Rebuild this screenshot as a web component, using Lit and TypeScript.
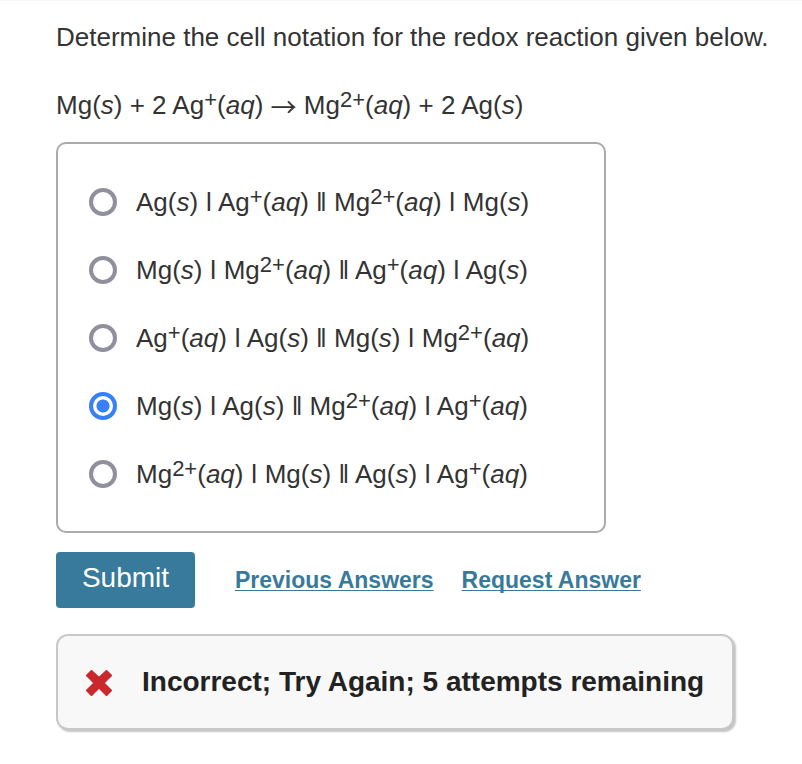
import { LitElement, html, css } from "lit";
import { customElement, state } from "lit/decorators.js";

const sup = (t: string) => html`<sup>${t}</sup>`;
const ph = (t: string) => html`(<i>${t}</i>)`;
const mg = html`Mg${ph("s")}`;
const mgIon = html`Mg${sup("2+")}${ph("aq")}`;
const ag = html`Ag${ph("s")}`;
const agIon = html`Ag${sup("+")}${ph("aq")}`;

const options = [
  [ag, agIon, mgIon, mg],
  [mg, mgIon, agIon, ag],
  [agIon, ag, mg, mgIon],
  [mg, ag, mgIon, agIon],
  [mgIon, mg, ag, agIon],
];

@customElement("app-root")
export class AppRoot extends LitElement {
  @state() private selected = 3;

  static styles = css`
    :host {
      display: block;
      padding: 19px 24px 32px 56px;
      border-top: 1px solid #f8f8f8;
      background: #fff;
      color: #333;
      font: 26px/34px "Liberation Sans", Arial, sans-serif;
    }
    p { margin: 0; }
    .reaction { margin: 34px 0 20px; }
    .arrow { font-family: "Noto Sans CJK JP", sans-serif; line-height: 0; vertical-align: -3px; }
    sup { font-size: 22px; line-height: 0; vertical-align: 7px; }
    .choices {
      box-sizing: border-box;
      width: fit-content;
      margin: 0;
      padding: 24px 75px 23px 31px;
      border: 2px solid #aaa;
      border-radius: 10px;
    }
    .choice { display: flex; align-items: center; gap: 19px; height: 68px; white-space: nowrap; }
    input {
      appearance: none;
      flex: none;
      box-sizing: border-box;
      width: 28px;
      height: 28px;
      margin: 0;
      border: 4px solid #8f8f9d;
      border-radius: 50%;
      background: #fff;
    }
    input:checked { border-color: #3880f8; background: radial-gradient(circle, #3880f8 6px, #fff 7px); }
    .actions { display: flex; align-items: center; gap: 28px; margin: 19px 0 26px; }
    button {
      width: 139px;
      height: 56px;
      margin-right: 12px;
      padding: 0 0 4px;
      border: 0;
      border-radius: 4px;
      background: #387a9b;
      color: #fff;
      font: 28px/34px "Liberation Sans", Arial, sans-serif;
    }
    a {
      color: #387a9b;
      font-size: 23px;
      font-weight: 700;
      text-decoration-thickness: 1px;
      text-underline-offset: 2px;
      text-decoration-skip-ink: none;
    }
    .feedback {
      display: flex;
      align-items: center;
      gap: 29px;
      box-sizing: border-box;
      width: fit-content;
      height: 96px;
      padding: 0 28px 0 27px;
      border: 2px solid #c8c8c8;
      border-radius: 12px;
      background: #f8f8f8;
      box-shadow: 2px 2px 2px #c4c4c4;
      color: #222;
      font-size: 28px;
      font-weight: 700;
      white-space: nowrap;
    }
    svg { flex: none; width: 28px; height: 28px; }
  `;

  render() {
    return html`
      <p>Determine the cell notation for the redox reaction given below.</p>
      <p class="reaction">${mg} + 2 ${agIon} <span class="arrow">→</span> ${mgIon} + 2 ${ag}</p>
      <fieldset class="choices" aria-label="Cell notation">
        ${options.map(
          ([a, b, c, d], i) => html`<label class="choice">
            <input type="radio" name="cell" .checked=${this.selected === i} @change=${() => (this.selected = i)} />
            <span>${a} ǀ ${b} ǁ ${c} ǀ ${d}</span>
          </label>`,
        )}
      </fieldset>
      <div class="actions">
        <button type="button">Submit</button>
        <a href="#previous">Previous Answers</a>
        <a href="#request">Request Answer</a>
      </div>
      <div class="feedback" role="status">
        <svg viewBox="0 0 28 28" aria-hidden="true">
          <path
            d="M6.5 3L14 10L21.5 3L26 7.5L18.5 15L26 22.5L21.5 27L14 19.5L6.5 27L2 22.5L9.5 15L2 7.5Z"
            fill="#c9282d"
            stroke="#c9282d"
            stroke-width="2"
            stroke-linejoin="round"
          />
        </svg>
        <span>Incorrect; Try Again; 5 attempts remaining</span>
      </div>
    `;
  }
}
